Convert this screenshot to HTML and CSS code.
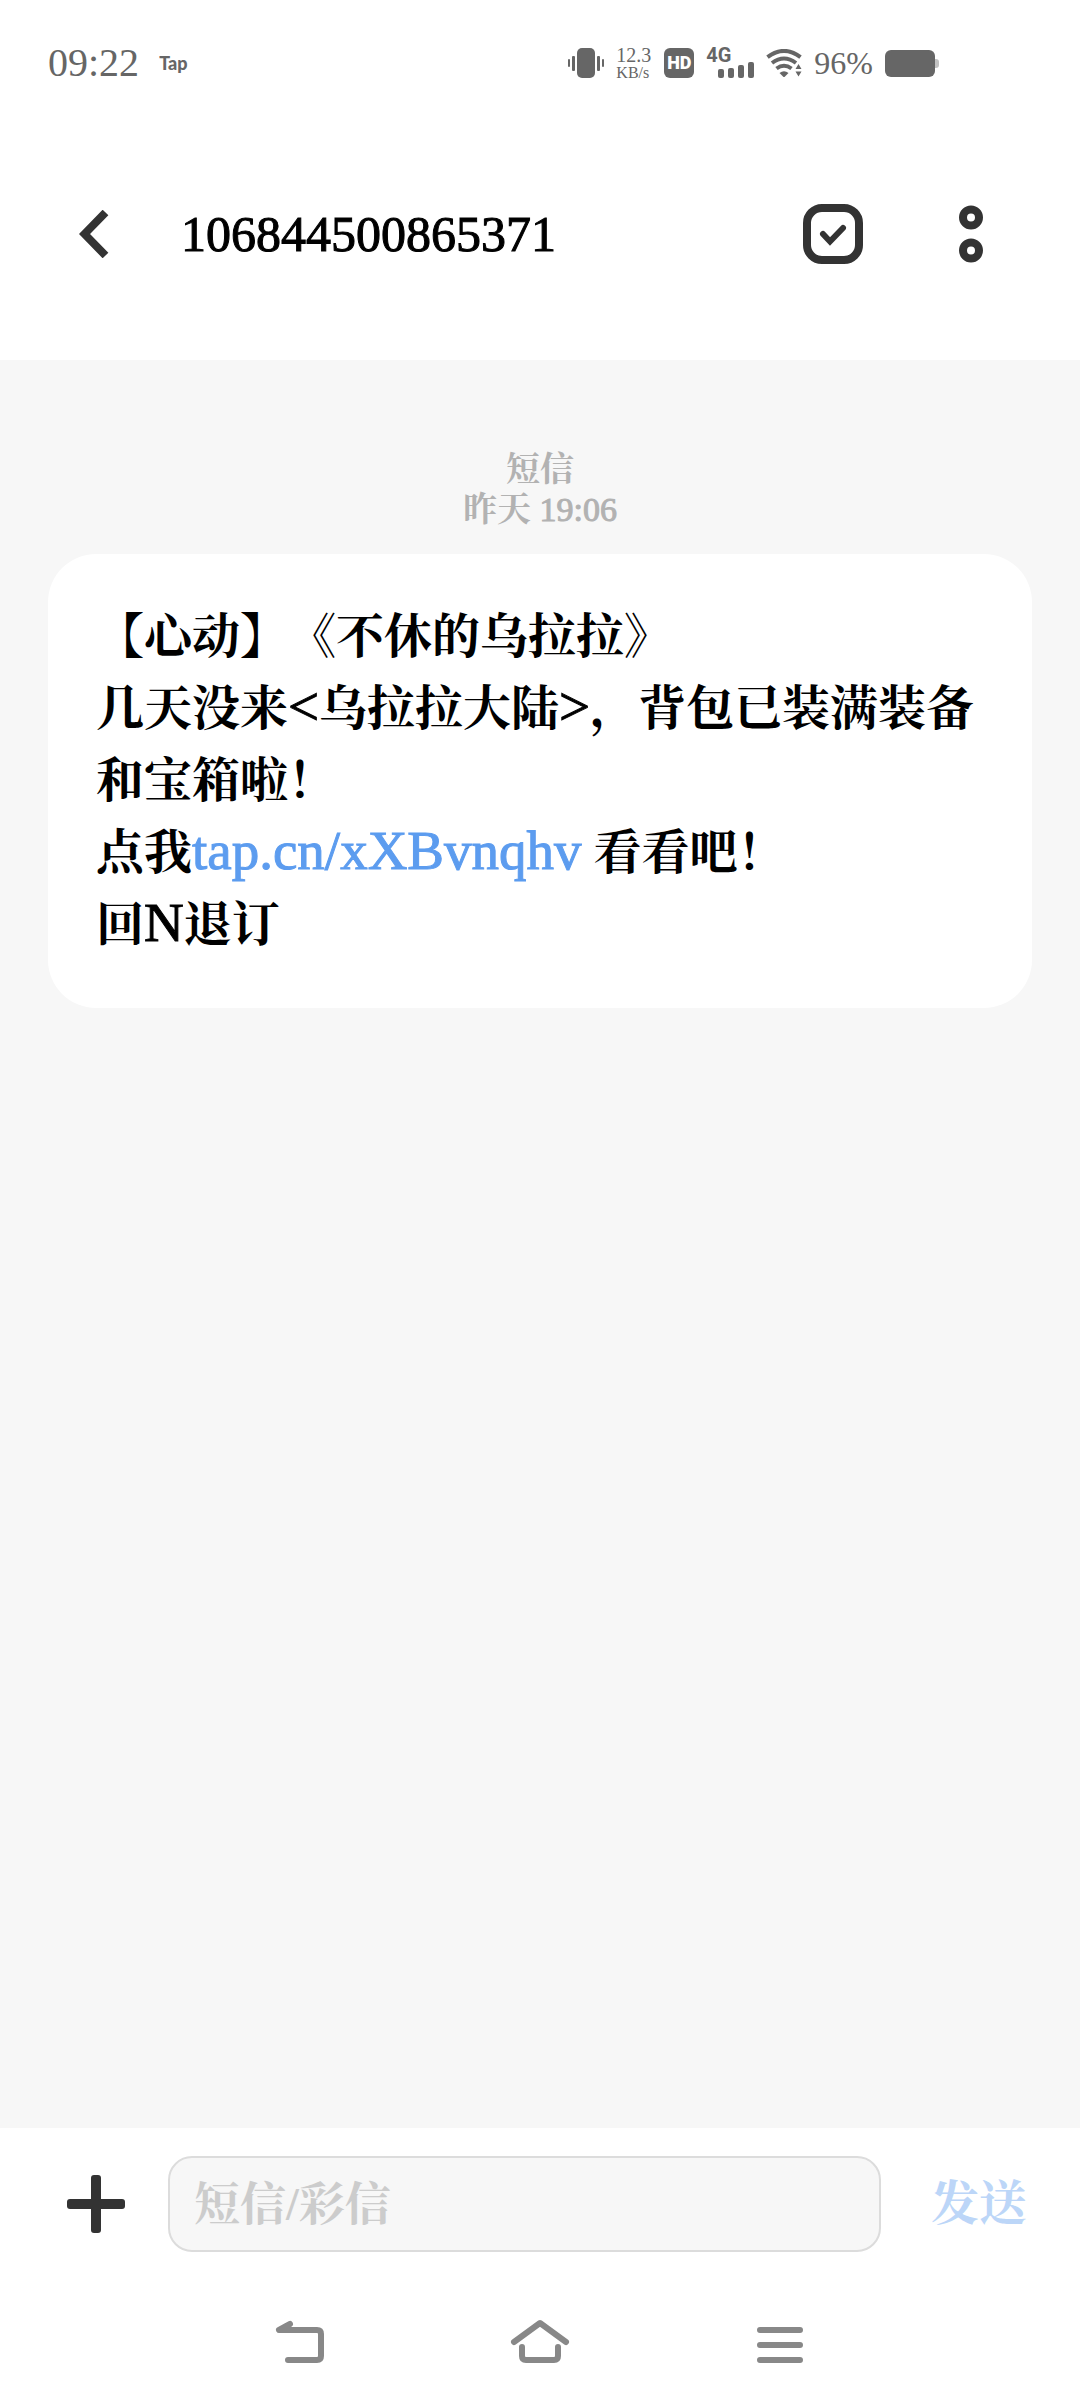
FILE: index.html
```html
<!DOCTYPE html>
<html lang="zh-CN">
<head>
<meta charset="utf-8">
<meta name="viewport" content="width=device-width, initial-scale=1">
<title>106844500865371</title>
<link rel="stylesheet" href="styles.css">
</head>
<body>
<div class="screen">
  <div class="status">
    <div class="status-left">
      <time class="clock">09:22</time>
      <span class="tap">Tap</span>
    </div>
    <div class="status-right">
      <svg class="icon" width="36" height="30" viewBox="0 0 36 30" fill="currentColor" aria-hidden="true">
        <rect x="9" width="18" height="30" rx="5"/>
        <rect x="4" y="8" width="3" height="15" rx="1"/><rect x="29" y="8" width="3" height="15" rx="1"/>
        <rect y="11" width="2" height="8" rx="1"/><rect x="34" y="11" width="2" height="8" rx="1"/>
      </svg>
      <div class="speed"><span class="speed-value">12.3</span><span class="speed-unit">KB/s</span></div>
      <span class="hd">HD</span>
      <div class="signal">
        <span class="network">4G</span>
        <svg class="bars" width="36" height="16" viewBox="0 0 36 16" fill="currentColor" aria-hidden="true">
          <rect y="7" width="6" height="9" rx="2"/><rect x="10" y="6" width="6" height="10" rx="2"/>
          <rect x="20" y="3" width="6" height="13" rx="2"/><rect x="30" width="6" height="16" rx="2"/>
        </svg>
      </div>
      <svg class="icon" width="36" height="28" viewBox="0 0 36 28" aria-hidden="true">
        <g fill="none" stroke="currentColor" stroke-width="4">
          <path d="M1.500 8.200Q18-4.400 34.500 8.200"/>
          <path d="M6 14Q18 5 30 14"/>
          <path d="M10.500 19.500Q18 14 25.500 19.500"/>
        </g>
        <path fill="currentColor" d="M13.500 24Q18 20.500 22.500 24L18 28.500Z M32.500 15l3 5h-6Z M32.500 27.500l3-5h-6Z"/>
      </svg>
      <span class="percent">96%</span>
      <svg class="icon" width="54" height="27" viewBox="0 0 54 27" fill="currentColor" aria-hidden="true">
        <rect width="50" height="27" rx="6"/><path d="M50 9h1q3 0 3 3v3q0 3-3 3h-1Z" opacity=".4"/>
      </svg>
    </div>
  </div>

  <header class="header">
    <button class="icon-button" type="button" aria-label="返回">
      <svg width="30" height="48" viewBox="0 0 30 48" fill="none" stroke="currentColor" stroke-width="8" aria-hidden="true"><path d="M26.500 2.500L5.500 24l21 21.500"/></svg>
    </button>
    <h1 class="title">106844500865371</h1>
    <button class="icon-button" type="button" aria-label="选择">
      <svg width="60" height="60" viewBox="0 0 60 60" fill="none" stroke="currentColor" aria-hidden="true">
        <rect x="4" y="4" width="52" height="52" rx="15" stroke-width="8"/>
        <path d="M20 30l7 7.500L40 24" stroke-width="6" stroke-linecap="round"/>
      </svg>
    </button>
    <button class="icon-button" type="button" aria-label="更多">
      <svg width="24" height="58" viewBox="0 0 24 58" fill="none" stroke="currentColor" stroke-width="8" aria-hidden="true">
        <circle cx="12" cy="12.500" r="8"/><circle cx="12" cy="45.500" r="8"/>
      </svg>
    </button>
  </header>

  <main class="thread">
    <div class="stamp">短信<br>昨天 <time class="stamp-time">19:06</time></div>
    <p class="bubble">【心动】《不休的乌拉拉》<br>几天没来<span class="latin">&lt;</span>乌拉拉大陆<span class="latin">&gt;</span>，背包已装满装备和宝箱啦！<br>点我<a class="latin link" href="#">tap.cn/xXBvnqhv</a> 看看吧！<br>回<span class="latin">N</span>退订</p>
  </main>

  <form class="composer">
    <button class="icon-button" type="button" aria-label="添加">
      <svg width="58" height="58" viewBox="0 0 58 58" fill="currentColor" aria-hidden="true">
        <rect y="24" width="58" height="10" rx="3"/><rect x="24" width="10" height="58" rx="3"/>
      </svg>
    </button>
    <input class="field" type="text" placeholder="短信/彩信" aria-label="短信/彩信">
    <button class="send" type="submit">发送</button>
  </form>

  <nav class="navbar" aria-label="系统导航">
    <button class="nav-button" type="button" aria-label="返回">
      <svg width="60" height="48" viewBox="0 0 60 48" aria-hidden="true"><path d="M20 6L9 12h38q4 0 4 4v22q0 4-4 4H18"/></svg>
    </button>
    <button class="nav-button" type="button" aria-label="主页">
      <svg width="60" height="48" viewBox="0 0 60 48" aria-hidden="true"><path d="M4 24L30 5l26 19M12 29v9q0 4 4 4h28q4 0 4-4v-9"/></svg>
    </button>
    <button class="nav-button" type="button" aria-label="最近任务">
      <svg width="60" height="48" viewBox="0 0 60 48" aria-hidden="true"><path d="M10 12h40M10 27h40M10 42h40"/></svg>
    </button>
  </nav>
</div>
</body>
</html>
```

FILE: styles.css
```css
* {
  box-sizing: border-box;
}

body {
  margin: 0;
  background: #fff;
  color: #000;
  font-family: "Liberation Serif", "Noto Serif CJK SC", "Noto Sans CJK SC", serif;
}

button {
  padding: 0;
  border: 0;
  background: none;
  color: inherit;
  font: inherit;
}

svg {
  display: block;
}

.screen {
  display: flex;
  flex-direction: column;
  min-height: 100vh;
}

/* Status bar */
.status {
  display: flex;
  justify-content: space-between;
  align-items: center;
  height: 126px;
  padding: 0 141px 0 48px;
  color: #666;
}

.status-left,
.status-right {
  display: flex;
  align-items: center;
}

.status-left {
  gap: 20px;
}

.clock {
  font-size: 40px;
  line-height: 48px;
}

.tap {
  font: 900 18px/24px Lato, sans-serif;
}

.status-right {
  gap: 12px;
}

.speed {
  display: flex;
  flex-direction: column;
  width: 36px;
}

.speed-value {
  font-size: 20px;
  line-height: 20px;
}

.speed-unit {
  font-size: 16px;
  line-height: 16px;
}

.hd {
  width: 30px;
  border-radius: 6px;
  background: #666;
  color: #fff;
  font: 900 18px/30px Roboto, sans-serif;
  text-align: center;
}

.signal {
  display: flex;
  flex-direction: column;
  width: 48px;
}

.network {
  font: bold 20px/14px Roboto, sans-serif;
}

.bars {
  align-self: flex-end;
}

.percent {
  font-size: 32px;
  line-height: 40px;
}

/* Conversation header */
.header {
  display: flex;
  align-items: center;
  gap: 96px;
  height: 234px;
  padding: 0 97px 18px 79px;
  color: #333;
}

.title {
  flex: 1;
  margin: 0 0 0 -24px;
  color: #000;
  font-size: 50px;
  font-weight: normal;
  line-height: 60px;
  -webkit-text-stroke: 1px currentColor;
}

/* Message thread */
.thread {
  flex: 1;
  padding: 90px 48px 48px;
  background: #f7f7f7;
}

.stamp {
  margin-bottom: 24px;
  color: #b2b2b2;
  font-size: 34px;
  font-weight: 700;
  line-height: 40px;
  text-align: center;
}

.stamp-time {
  font-weight: 400;
  -webkit-text-stroke: 1px currentColor;
}

.bubble {
  margin: 0;
  padding: 47px 48px;
  border-radius: 48px;
  background: #fff;
  font-size: 48px;
  font-weight: 700;
  line-height: 72px;
  text-spacing-trim: space-all;
}

.latin {
  font-size: 55px;
  font-weight: 400;
  line-height: 60px;
  -webkit-text-stroke: 1px currentColor;
}

.link {
  color: #5c9cef;
  text-decoration: none;
}

/* Composer */
.composer {
  display: flex;
  align-items: center;
  gap: 43px;
  padding: 28px 53px 28px 67px;
  color: #333;
}

.field {
  flex: 1;
  min-width: 0;
  height: 96px;
  padding: 0 24px;
  border: 2px solid #dcdcdc;
  border-radius: 24px;
  background: #f7f7f7;
  color: #000;
  font: 700 46px/60px "Liberation Serif", "Noto Serif CJK SC", "Noto Sans CJK SC", serif;
}

.field::placeholder {
  color: #ccc;
  opacity: 1;
}

.send {
  margin-left: 7px;
  color: #bcd6f8;
  font-size: 48px;
  font-weight: 700;
  line-height: 60px;
}

/* System navigation */
.navbar {
  display: flex;
  justify-content: center;
  gap: 180px;
  height: 128px;
  padding-top: 38px;
}

.nav-button {
  width: 60px;
  height: 48px;
}

.nav-button svg {
  fill: none;
  stroke: #888;
  stroke-width: 6;
  stroke-linecap: round;
  stroke-linejoin: round;
}
```
